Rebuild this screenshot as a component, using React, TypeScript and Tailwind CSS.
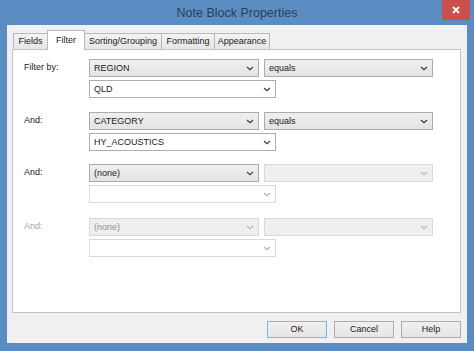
import React from "react";

const Chevron = ({ disabled }: { disabled?: boolean }) => (
  <svg width="8" height="5" viewBox="0 0 8 5" className="shrink-0">
    <path
      d="M1 1 L4 3.8 L7 1"
      fill="none"
      stroke={disabled ? "#b4b4b4" : "#3c3c3c"}
      strokeWidth="1.2"
    />
  </svg>
);

// read-only dropdown (gray gradient)
const Combo = ({ text, width, disabled }: { text?: string; width: string; disabled?: boolean }) => (
  <div
    className={`${width} h-[18px] flex items-center justify-between pl-[4px] pr-[4px] border ${
      disabled
        ? "border-[#d9d9d9] bg-[#efefef] text-[#8d8d8d]"
        : "border-[#acacac] bg-gradient-to-b from-[#f0f0f0] to-[#e3e3e3] text-[#1a1a1a]"
    }`}
  >
    <span className="leading-none">{text}</span>
    <Chevron disabled={disabled} />
  </div>
);

// editable dropdown (white)
const EditCombo = ({ text, disabled }: { text?: string; disabled?: boolean }) => (
  <div
    className={`w-[187px] h-[18px] flex items-center justify-between pl-[4px] pr-[4px] border bg-white ${
      disabled ? "border-[#d9d9d9]" : "border-[#abadb3]"
    } text-[#1a1a1a]`}
  >
    <span className="leading-none">{text}</span>
    <Chevron disabled={disabled} />
  </div>
);

const FilterRow = ({
  label,
  field,
  op,
  value,
  level,
}: {
  label: string;
  field: string;
  op?: string;
  value?: string;
  level: 0 | 1 | 2;
}) => (
  <div className="flex">
    <div
      className={`w-[65px] h-[18px] flex items-center ${level === 2 ? "text-[#a3a3a3]" : "text-[#1a1a1a]"}`}
    >
      {label}
    </div>
    <div className="flex flex-col gap-[3px]">
      <div className="flex gap-[5px]">
        <Combo text={field} width="w-[170px]" disabled={level === 2} />
        <Combo text={op} width="w-[169px]" disabled={level > 0} />
      </div>
      <EditCombo text={value} disabled={level > 0} />
    </div>
  </div>
);

const tabBase =
  "h-[16px] mt-[3px] flex items-center justify-center border border-b-0 border-[#b9b9b9] bg-gradient-to-b from-[#f3f3f3] to-[#e6e6e6] text-[#1a1a1a]";

export default function App() {
  return (
    <div
      className="w-[474px] h-[351px] bg-[#5b8cc2] flex flex-col overflow-hidden text-[9px]"
      style={{ fontFamily: '"Liberation Sans", Arial, sans-serif' }}
    >
      {/* title bar */}
      <div className="relative h-[25px] flex items-center justify-center">
        <span className="text-[12.5px] text-[#2c3e5c] mt-[1px]">Note Block Properties</span>
        <div className="absolute right-[4px] top-0 w-[28px] h-[20px] bg-[#c9504c] flex items-center justify-center">
          <svg width="8" height="8" viewBox="0 0 8 8">
            <path d="M1 1 L7 7 M7 1 L1 7" stroke="#fff" strokeWidth="1.8" />
          </svg>
        </div>
      </div>

      {/* client */}
      <div className="mx-[7px] mb-[8px] flex-1 bg-[#f0f0f0] pl-[5px] pr-[6px] pt-[5px] flex flex-col">
        <div className="flex h-[20px] items-start pl-[1px] relative z-10">
          <div className={`${tabBase} w-[35px]`}>Fields</div>
          <div className="w-[38px] h-[20px] -ml-[1px] pt-[3px] text-center border border-b-0 border-[#b9b9b9] bg-white text-[#1a1a1a]">
            Filter
          </div>
          <div className={`${tabBase} w-[78px] -ml-[1px]`}>Sorting/Grouping</div>
          <div className={`${tabBase} w-[54px] -ml-[1px]`}>Formatting</div>
          <div className={`${tabBase} w-[56px] -ml-[1px]`}>Appearance</div>
        </div>

        <div className="-mt-[1px] h-[264px] bg-white border border-[#c4c4c4] pl-[11px] pt-[9px] flex flex-col">
          <FilterRow label="Filter by:" field="REGION" op="equals" value="QLD" level={0} />
          <div className="h-[14px]" />
          <FilterRow label="And:" field="CATEGORY" op="equals" value="HY_ACOUSTICS" level={0} />
          <div className="h-[13px]" />
          <FilterRow label="And:" field="(none)" level={1} />
          <div className="h-[15px]" />
          <FilterRow label="And:" field="(none)" level={2} />
        </div>

        <div className="flex justify-end gap-[7px] mt-[8px]">
          <button className="w-[60px] h-[17px] border border-[#7eb4ea] bg-gradient-to-b from-[#f0f0f0] to-[#e5e5e5] text-[#1a1a1a] text-[9px]">
            OK
          </button>
          <button className="w-[60px] h-[17px] border border-[#acacac] bg-gradient-to-b from-[#f0f0f0] to-[#e5e5e5] text-[#1a1a1a] text-[9px]">
            Cancel
          </button>
          <button className="w-[60px] h-[17px] border border-[#acacac] bg-gradient-to-b from-[#f0f0f0] to-[#e5e5e5] text-[#1a1a1a] text-[9px]">
            Help
          </button>
        </div>
      </div>
    </div>
  );
}
